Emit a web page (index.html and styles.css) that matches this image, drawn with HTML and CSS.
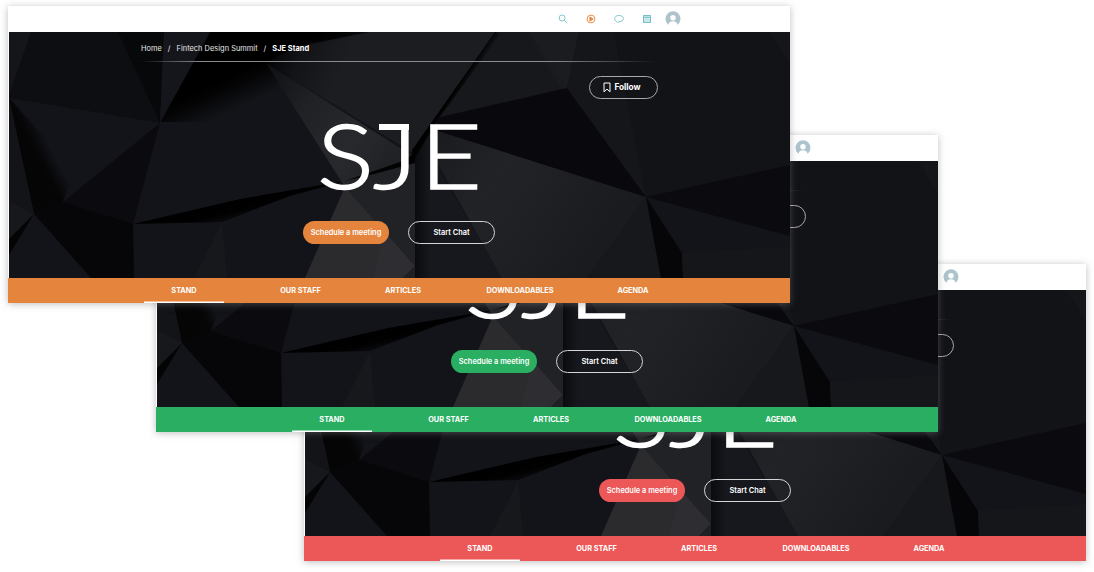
FILE: index.html
```
<!DOCTYPE html>
<html lang="en">
<head>
<meta charset="utf-8">
<title>SJE Stand</title>
<link rel="stylesheet" href="styles.css">
</head>
<body>
<svg class="defs" aria-hidden="true">
  <defs>
    <linearGradient id="gShade" gradientUnits="userSpaceOnUse" x1="204" y1="88" x2="218" y2="118"><stop offset="0" stop-color="#000"/><stop offset=".3" stop-color="#000" stop-opacity=".8"/><stop offset="1" stop-color="#000" stop-opacity="0"/></linearGradient>
    <linearGradient id="gTop" gradientUnits="userSpaceOnUse" x1="268" y1="50" x2="335" y2="82"><stop offset="0" stop-color="#020203"/><stop offset=".45" stop-color="#131418"/><stop offset="1" stop-color="#1c1d21"/></linearGradient>
    <linearGradient id="gBeam" gradientUnits="userSpaceOnUse" x1="265" y1="62" x2="400" y2="165"><stop offset="0" stop-color="#0e0f12"/><stop offset=".35" stop-color="#202125"/><stop offset=".7" stop-color="#28292c"/><stop offset="1" stop-color="#1f2024"/></linearGradient>
    <linearGradient id="gWedge" gradientUnits="userSpaceOnUse" x1="240" y1="198" x2="246" y2="222"><stop offset="0" stop-color="#000"/><stop offset=".45" stop-color="#010102"/><stop offset="1" stop-color="#0f1014"/></linearGradient>
    <linearGradient id="gLeft" gradientUnits="userSpaceOnUse" x1="36" y1="150" x2="49" y2="143.300"><stop offset="0" stop-color="#050506"/><stop offset="1" stop-color="#131419"/></linearGradient>
    <linearGradient id="gFold" gradientUnits="userSpaceOnUse" x1="415" y1="0" x2="430" y2="0"><stop offset="0" stop-color="#0a0b0d"/><stop offset="1" stop-color="#17181d"/></linearGradient>
    <linearGradient id="gCrease" gradientUnits="userSpaceOnUse" x1="464" y1="76" x2="471" y2="80.500"><stop offset="0" stop-color="#000"/><stop offset="1" stop-color="#000" stop-opacity="0"/></linearGradient>
    <linearGradient id="gRight" gradientUnits="userSpaceOnUse" x1="440" y1="140" x2="600" y2="250"><stop offset="0" stop-color="#1b1c20"/><stop offset=".35" stop-color="#222327"/><stop offset="1" stop-color="#1a1b1f"/></linearGradient>
    <symbol id="facets" viewBox="9 32 781 246" preserveAspectRatio="none">
      <rect x="9" y="32" width="781" height="246" fill="#131419"/>
      <path fill="#15161a" d="M9 32h22L9 95z"/>
      <path fill="#0d0e11" d="M31 32h88l41 91L9 98v-3z"/>
      <path fill="#070809" d="M118 32h46l-4 91z"/>
      <path fill="url(#gShade)" d="M210 32h165l-60 90H160z"/>
      <path fill="#15161b" d="M164 32h46l-50 91z"/>
      <path fill="url(#gTop)" d="M300 46l70-14h125l-82 121L266 62z"/>
      <path fill="#131419" d="M9 98l151 25-97 79z"/>
      <path fill="url(#gLeft)" d="M9 98l66 72-12 32z"/>
      <path fill="#050506" d="M9 98l54 104-29 12z"/>
      <path fill="#0b0a0e" d="M160 123l-27 101-70-22z"/>
      <path fill="#060608" d="M34 214l29-12 70 22 1 54H91z"/>
      <path fill="#131418" d="M9 98l25 116-25-13z"/>
      <path fill="#17181c" d="M9 201l25 13-25 25z"/>
      <path fill="#040405" d="M34 214L9 239v16z"/>
      <path fill="url(#gWedge)" d="M133 224l107-25 105-18-55 15-68 26z"/>
      <path fill="#17181b" d="M222 223l5 55h-33z"/>
      <path fill="url(#gBeam)" d="M266 63l145 92-8 12-58 20z"/>
      <path fill="#212226" d="M345 187l70-26v105z"/>
      <path fill="#020203" d="M345 181l58-20 12-8v10l-45 12z"/>
      <path fill="#2b2b2e" d="M345 187l70 79-12 12h-98z"/>
      <path fill="#333236" d="M385 232l30 34-12 12h-30z" opacity=".35"/>
      <path fill="#1f2024" d="M415 266v12h-12z"/>
      <path fill="url(#gFold)" d="M415 152l24-31v50l63 107h-87z"/>
      <path fill="#17181c" d="M495 32h33l39 56-129 31-25 34z"/>
      <path fill="url(#gCrease)" d="M495 32l6 2-62 84-26 44-1-12z"/>
      <path fill="url(#gRight)" d="M438 131l208 66-59 81h-85l-68-121z"/>
      <path fill="#09080d" d="M436 118l131-30 79 109-208-66z"/>
      <path fill="#1b1c20" d="M528 32h51l-12 56z"/>
      <path fill="#1a1b1f" d="M528 32l39 56-6 1z"/>
      <path fill="#15161a" d="M579 32h35l32 165-79-109z"/>
      <path fill="#121317" d="M614 32h156l20 32v102l-144 31z"/>
      <path fill="#15161a" d="M770 32h20v32z"/>
      <path fill="#0b0a0f" d="M646 197l144-32v71z"/>
      <path fill="#17181c" d="M646 197l15 81h-74z"/>
      <path fill="#060608" d="M646 197l36 56 1 25h-22z"/>
      <path fill="#15161a" d="M682 253l108-7v32H683z"/>
    </symbol>
    <symbol id="search" viewBox="0 0 10 10"><circle cx="4.100" cy="4" r="3"/><path d="M6.200 6.200L9.200 9.200"/></symbol>
    <symbol id="play" viewBox="0 0 10 10"><circle cx="5" cy="5" r="3.900"/><path d="M3.900 2.900v4.200L7.100 5z" fill="#e5853d"/></symbol>
    <symbol id="chat" viewBox="0 0 10 10"><path d="M2.600 7.600C1.200 6.900.7 5.900.7 4.700.7 2.700 2.200 1.500 5 1.500s4.300 1.200 4.300 3.200S7.600 7.600 5 7.700L3.200 8.500z"/></symbol>
    <symbol id="calendar" viewBox="0 0 10 10"><path fill="#c8e7eb" d="M1.500 1.500h7v7h-7z"/><path d="M1.500 1.500h7v7h-7zM1.500 3.300h7"/></symbol>
    <symbol id="avatar" viewBox="0 0 16 16"><circle cx="8" cy="7.800" r="7.500" fill="#adc4cc"/><circle cx="8" cy="6.700" r="2.700" fill="#fff"/><path fill="#fff" d="M3.400 14.700C3.500 11.500 5.200 10.200 8 10.200s4.500 1.300 4.600 4.500L8 16z"/></symbol>
    <symbol id="bookmark" viewBox="0 0 8 11"><path d="M1 1h6v8.800L4 7.100 1 9.800z"/></symbol>
  </defs>
</svg>

<main class="stage">
  <section class="window red">
    <header class="topbar"><svg><use href="#search"/></svg><svg class="play"><use href="#play"/></svg><svg><use href="#chat"/></svg><svg><use href="#calendar"/></svg><svg class="avatar"><use href="#avatar"/></svg></header>
    <div class="hero">
      <svg class="art"><use href="#facets"/></svg>
      <div class="crumbs"></div>
      <button class="follow"></button>
      <h1 class="logo"><span class="s">S</span><span class="j">J</span><span class="e">E</span></h1>
      <div class="actions"><button class="meet">Schedule a meeting</button><button class="chat">Start Chat</button></div>
    </div>
    <nav class="tabs"><a class="active">STAND</a><a>OUR STAFF</a><a>ARTICLES</a><a>DOWNLOADABLES</a><a>AGENDA</a></nav>
  </section>
  <section class="window green">
    <header class="topbar"><svg><use href="#search"/></svg><svg class="play"><use href="#play"/></svg><svg><use href="#chat"/></svg><svg><use href="#calendar"/></svg><svg class="avatar"><use href="#avatar"/></svg></header>
    <div class="hero">
      <svg class="art"><use href="#facets"/></svg>
      <div class="crumbs"></div>
      <button class="follow"></button>
      <h1 class="logo"><span class="s">S</span><span class="j">J</span><span class="e">E</span></h1>
      <div class="actions"><button class="meet">Schedule a meeting</button><button class="chat">Start Chat</button></div>
    </div>
    <nav class="tabs"><a class="active">STAND</a><a>OUR STAFF</a><a>ARTICLES</a><a>DOWNLOADABLES</a><a>AGENDA</a></nav>
  </section>
  <section class="window orange">
    <header class="topbar"><svg><use href="#search"/></svg><svg class="play"><use href="#play"/></svg><svg><use href="#chat"/></svg><svg><use href="#calendar"/></svg><svg class="avatar"><use href="#avatar"/></svg></header>
    <div class="hero">
      <svg class="art"><use href="#facets"/></svg>
      <div class="crumbs"><span>Home</span><i>/</i><span>Fintech Design Summit</span><i>/</i><b>SJE Stand</b></div>
      <button class="follow"><svg><use href="#bookmark"/></svg>Follow</button>
      <h1 class="logo"><span class="s">S</span><span class="j">J</span><span class="e">E</span></h1>
      <div class="actions"><button class="meet">Schedule a meeting</button><button class="chat">Start Chat</button></div>
    </div>
    <nav class="tabs"><a class="active">STAND</a><a>OUR STAFF</a><a>ARTICLES</a><a>DOWNLOADABLES</a><a>AGENDA</a></nav>
  </section>
</main>
</body>
</html>
```
FILE: styles.css
```
* { box-sizing: border-box; }
body { margin: 0; background: #fff; font-family: Inter, Roboto, sans-serif; color: #fff; }
.defs { position: absolute; width: 0; height: 0; }
.stage { position: relative; width: 1094px; height: 572px; overflow: hidden; }

.window { position: absolute; width: 782px; display: flex; flex-direction: column; background: #fff; box-shadow: 0 1px 7px rgba(125, 125, 125, .5); }
.orange { left: 8px; top: 6px; --accent: #e5853d; --icons: 550px; }
.green { left: 156px; top: 135px; --accent: #29ae62; --icons: 532px; }
.red { left: 304px; top: 264px; --accent: #ec5757; --icons: 532px; }

.topbar { height: 26px; display: flex; align-items: center; gap: 18px; padding-left: var(--icons); }
.topbar svg { width: 10px; height: 10px; fill: none; stroke: #76c1ca; stroke-width: .9; }
.topbar .play { stroke: #e5853d; }
.topbar .avatar { width: 16px; height: 16px; stroke: none; margin-left: -5px; }

.hero { position: relative; margin-left: 1px; height: 246px; display: flex; flex-direction: column; }
.art { position: absolute; inset: 0; width: 100%; height: 100%; }
.crumbs, .follow, .logo, .actions { position: relative; }
.crumbs { width: 516px; height: 30px; margin-left: 131px; padding: 11px 0 0 1px; display: flex; gap: 6px; font-size: 7.4px; letter-spacing: .03px; line-height: 12px; white-space: nowrap; color: #e9e9ea; }
.crumbs i { font-style: normal; }
.crumbs b { color: #fff; }
.crumbs::after { content: ""; position: absolute; left: 0; right: 0; bottom: 0; height: 1px; background: linear-gradient(90deg, transparent, #8a8b8d 12%, #8a8b8d 80%, transparent); }

button { margin: 0; padding: 0; color: #fff; font: 600 7.4px/1 Inter, sans-serif; background: none; border: 0; border-radius: 12px; white-space: nowrap; }
.follow { width: 69px; height: 23px; margin: 14px 0 0 580px; padding-right: 3px; border: 1px solid #a9a9ab; display: flex; align-items: center; justify-content: center; gap: 3px; font-size: 8.3px; font-weight: 700; }
.follow svg { width: 8px; height: 11px; fill: none; stroke: #fff; stroke-width: 1; }

.logo { height: 66px; margin: 22px 0 0 307.5px; display: flex; font: 300 91px/66px Lato, sans-serif; -webkit-text-stroke: 1.6px #fff; }
.logo span { display: block; transform-origin: 0 50%; }
.s { width: 56.5px; transform: scaleX(1.17); }
.j { position: relative; width: 46.5px; transform: scaleX(1.2); }
.j::before { content: ""; position: absolute; left: 5px; top: 2.500px; width: 25px; height: 6px; background: #fff; }
.e { transform: scaleX(1.17); }

.actions { display: flex; gap: 19px; margin: 34px 0 0 294px; }
.meet { width: 86px; height: 23px; background: var(--accent); }
.chat { width: 87px; height: 23px; border: 1.500px solid #d5d5d6; }

.tabs { height: 25.400px; display: grid; grid-template-columns: 80px 153px 52px 182px 44px; padding-left: 136px; background: var(--accent); font-size: 7.300px; font-weight: 700; line-height: 25px; white-space: nowrap; }
.tabs a { display: flex; justify-content: center; height: 25px; }
.active { box-shadow: inset 0 -1.500px #fff; }
```
